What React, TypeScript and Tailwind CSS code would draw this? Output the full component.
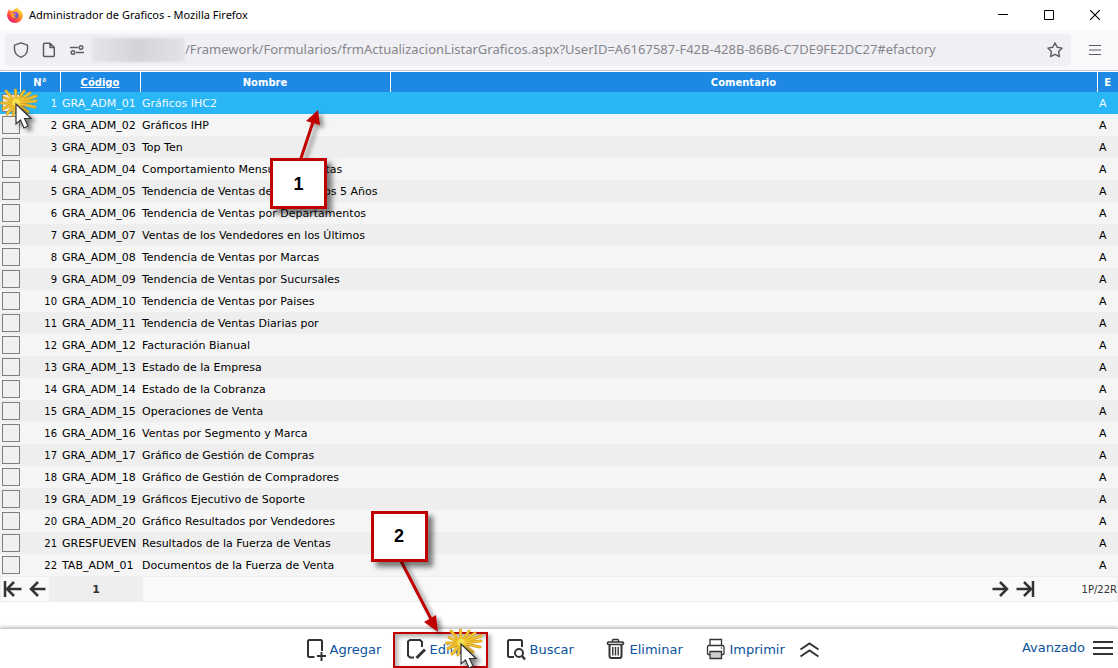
import { useState } from 'react'

interface Chart {
  code: string
  name: string
}

const CHARTS: Chart[] = [
  { code: 'GRA_ADM_01', name: 'Gráficos IHC2' },
  { code: 'GRA_ADM_02', name: 'Gráficos IHP' },
  { code: 'GRA_ADM_03', name: 'Top Ten' },
  { code: 'GRA_ADM_04', name: 'Comportamiento Mensual de Ventas' },
  { code: 'GRA_ADM_05', name: 'Tendencia de Ventas de los Últimos 5 Años' },
  { code: 'GRA_ADM_06', name: 'Tendencia de Ventas por Departamentos' },
  { code: 'GRA_ADM_07', name: 'Ventas de los Vendedores en los Últimos' },
  { code: 'GRA_ADM_08', name: 'Tendencia de Ventas por Marcas' },
  { code: 'GRA_ADM_09', name: 'Tendencia de Ventas por Sucursales' },
  { code: 'GRA_ADM_10', name: 'Tendencia de Ventas por Paises' },
  { code: 'GRA_ADM_11', name: 'Tendencia de Ventas Diarias por' },
  { code: 'GRA_ADM_12', name: 'Facturación Bianual' },
  { code: 'GRA_ADM_13', name: 'Estado de la Empresa' },
  { code: 'GRA_ADM_14', name: 'Estado de la Cobranza' },
  { code: 'GRA_ADM_15', name: 'Operaciones de Venta' },
  { code: 'GRA_ADM_16', name: 'Ventas por Segmento y Marca' },
  { code: 'GRA_ADM_17', name: 'Gráfico de Gestión de Compras' },
  { code: 'GRA_ADM_18', name: 'Gráfico de Gestión de Compradores' },
  { code: 'GRA_ADM_19', name: 'Gráficos Ejecutivo de Soporte' },
  { code: 'GRA_ADM_20', name: 'Gráfico Resultados por Vendedores' },
  { code: 'GRESFUEVEN', name: 'Resultados de la Fuerza de Ventas' },
  { code: 'TAB_ADM_01', name: 'Documentos de la Fuerza de Venta' },
]

function FirefoxLogo() {
  return (
    <svg width="16" height="16" viewBox="0 0 16 16" aria-hidden="true">
      <defs>
        <linearGradient id="fx-body" x1="0.85" y1="0.1" x2="0.2" y2="0.95">
          <stop offset="0" stopColor="#fff14a" />
          <stop offset="0.35" stopColor="#ffa126" />
          <stop offset="0.7" stopColor="#ff4a3d" />
          <stop offset="1" stopColor="#e5177b" />
        </linearGradient>
        <linearGradient id="fx-globe" x1="0.3" y1="0" x2="0.6" y2="1">
          <stop offset="0" stopColor="#a45bea" />
          <stop offset="1" stopColor="#4a4fd0" />
        </linearGradient>
      </defs>
      <path
        d="M2.6 2.1C2.7 3 3 3.500 3.500 3.900C4.200 3.700 5 3.700 5.800 4C6.500 2.800 7.500 2.300 8.300 2.100C8.600 1.300 9.200 0.500 9.900 0C10 1.400 11 2 12.300 2.900C13 3.400 13.300 3.900 13.500 4.200C13.500 3.800 13.400 3.300 13.300 3C15 4.400 15.900 6.300 15.900 8.500A7.900 7.500 0 0 1 0.100 8.500C0.100 5.800 1.300 3.500 2.600 2.100Z"
        fill="url(#fx-body)"
      />
      <circle cx="8.300" cy="8.300" r="3.200" fill="url(#fx-globe)" />
      <path d="M3.400 6C5 5.200 6.300 6 7.200 6.700C8 6.700 8.900 6.800 9 7.200C8.600 8 7.300 8 7 8.800C7 9.700 8.600 10 9.800 9.300C9 11.300 5.500 11.500 4.300 9.300Z" fill="#ff9a2c" />
    </svg>
  )
}

const RAYS =
  'M16 15L6 3M16 15L15.500 2M16 15L24 3M16 15L30 5M16 15L36 8M16 15L36 13M16 15L35 19M16 15L28 24M16 15L1.500 15M16 15L4 9.500M16 15L3 20.500M16 15L7 26M16 15L13 27'

function ClickPointer() {
  return (
    <svg width="44" height="48" viewBox="0 0 44 48" className="block" aria-hidden="true">
      <defs>
        <filter id="pointer-shadow" x="-50%" y="-50%" width="200%" height="200%">
          <feDropShadow dx="4" dy="3" stdDeviation="2" floodColor="#000" floodOpacity="0.5" />
        </filter>
      </defs>
      <path d={RAYS} stroke="#dba51c" strokeWidth="3" strokeLinecap="round" />
      <path d={RAYS} stroke="#f8cf3a" strokeWidth="1.200" strokeLinecap="round" />
      <circle cx="16" cy="14" r="3.500" fill="#f5e04e" />
      <g filter="url(#pointer-shadow)">
        <path d="M16 16V36L20.500 32L24 40L28 38L24.500 30.500H31Z" fill="#fff" stroke="#333" strokeWidth="1.200" />
      </g>
    </svg>
  )
}

function AddIcon() {
  return (
    <svg width="20" height="23" viewBox="0 0 20 23" aria-hidden="true">
      <path d="M8.500 19H3L2 18V3L3 2H15L16 3V13M11 18H20M15.500 14V23" fill="none" stroke="#333" strokeWidth="2" />
    </svg>
  )
}

function EditIcon() {
  return (
    <svg width="20" height="23" viewBox="0 0 20 23" aria-hidden="true">
      <path d="M8 19.500H4L2 17.500V3.500L4 2H14L16 4V9" fill="none" stroke="#333" strokeWidth="2" />
      <path d="M10.500 20L19 11.500" stroke="#333" strokeWidth="3" />
    </svg>
  )
}

function SearchIcon() {
  return (
    <svg width="20" height="23" viewBox="0 0 20 23" aria-hidden="true">
      <path d="M8 19H3L2 18V3L3 2H15L16 3V9" fill="none" stroke="#333" strokeWidth="2" />
      <circle cx="13" cy="15" r="4" fill="none" stroke="#333" strokeWidth="2" />
      <path d="M16 18L19 21.500" stroke="#333" strokeWidth="2.400" />
    </svg>
  )
}

function TrashIcon() {
  return (
    <svg width="20" height="23" viewBox="0 0 20 23" fill="none" stroke="#333" aria-hidden="true">
      <path d="M6.500 4V2.500Q6.500 1.500 7.500 1.500H11.500Q12.500 1.500 12.500 2.500V4" strokeWidth="1.500" />
      <rect x="1.500" y="4" width="16" height="2.500" rx="1" strokeWidth="1.600" />
      <path d="M3.500 7V18Q3.500 20 5.500 20H13.500Q15.500 20 15.500 18V7" strokeWidth="2" />
      <path d="M6.800 9V17.500M9.500 9V17.500M12.200 9V17.500" strokeWidth="1.400" />
    </svg>
  )
}

function PrintIcon() {
  return (
    <svg width="20" height="23" viewBox="0 0 20 23" fill="none" stroke="#333" strokeWidth="1.300" aria-hidden="true">
      <path d="M4 7.500V1.500H15.500V7.500" />
      <path d="M4 16.500H2.500Q1.500 16.500 1.500 15.500V9Q1.500 7.500 3 7.500H16.500Q18 7.500 18 9V15.500Q18 16.500 17 16.500H15.500" />
      <path d="M4 13.500H15.500V20.500H4Z" fill="#ccc" />
      <circle cx="15.500" cy="10" r="0.700" fill="#333" stroke="none" />
    </svg>
  )
}

function PagerArrow({ back = false, bar = false }: { back?: boolean; bar?: boolean }) {
  return (
    <svg width="20" height="20" viewBox="0 0 20 20" fill="none" stroke="#333" strokeWidth="2.500" className={back ? 'rotate-180' : ''} aria-hidden="true">
      <path d="M1.500 10H16M9 3L16 10L9 17" />
      {bar && <path d="M18 2V18" />}
    </svg>
  )
}

function Callout({ label }: { label: string }) {
  return (
    <div className="flex h-[51px] w-[57px] items-center justify-center border-3 border-[#c00000] bg-white font-['Liberation_Sans',sans-serif] text-lg font-bold text-black shadow-[5px_5px_5px_rgba(0,0,0,0.5)]">
      {label}
    </div>
  )
}

const barButton = 'flex h-9 w-[100px] items-center gap-1 pl-[7px] text-[13px] text-[#0b539b]'
const windowButton = 'flex h-[30px] w-[46px] items-center justify-center'

export default function App() {
  const [selected, setSelected] = useState(0)

  return (
    <div className="relative flex min-h-screen flex-col overflow-hidden bg-white font-['DejaVu_Sans',Verdana,sans-serif] text-[11px] text-black">
      {/* Window title */}
      <header className="flex h-[30px] items-center gap-[6px] pl-[7px] font-['Noto_Sans',sans-serif] text-[11px]">
        <FirefoxLogo />
        <h1>Administrador de Graficos - Mozilla Firefox</h1>
        <div className="ml-auto flex">
          <button type="button" aria-label="Minimizar" className={windowButton}>
            <svg width="10" height="10" stroke="#000"><path d="M0 4.500H10" /></svg>
          </button>
          <button type="button" aria-label="Maximizar" className={windowButton}>
            <svg width="10" height="10" stroke="#000" fill="none"><path d="M0.500 0.500H9.500V9.500H0.500Z" /></svg>
          </button>
          <button type="button" aria-label="Cerrar" className={windowButton}>
            <svg width="10" height="10" stroke="#000" strokeWidth="1.200"><path d="M0 0L10 10M10 0L0 10" /></svg>
          </button>
        </div>
      </header>

      {/* Address bar */}
      <div className="mb-px flex h-[41px] items-center border-b border-[#c8c8ce] bg-[#f9f9fb] pl-[5px]">
        <div className="flex h-8 min-w-0 flex-1 items-center rounded bg-[#f0f0f4] pr-2 pl-2 text-[#5b5b66]">
          <svg width="16" height="16" viewBox="0 0 16 16" fill="none" stroke="currentColor" strokeWidth="1.400" className="shrink-0" aria-hidden="true">
            <path d="M8 0.900L14.500 3.200V7C14.500 11 12 13.800 8 15.300C4 13.800 1.500 11 1.500 7V3.200Z" strokeLinejoin="round" />
          </svg>
          <svg width="16" height="16" viewBox="0 0 16 16" fill="none" stroke="currentColor" strokeWidth="1.500" className="ml-3 shrink-0" aria-hidden="true">
            <path d="M3.500 1.200H9L13.300 5.500V13.500Q13.300 14.500 12.300 14.500H3.500Q2.500 14.500 2.500 13.500V2.200Q2.500 1.200 3.500 1.200ZM9 1.200V5.500H13.300" strokeLinejoin="round" />
          </svg>
          <svg width="16" height="16" viewBox="0 0 16 16" fill="none" stroke="currentColor" strokeWidth="1.400" className="ml-3 shrink-0" aria-hidden="true">
            <path d="M1 5.500H9M7 10.500H15" />
            <circle cx="12" cy="5.500" r="1.800" />
            <circle cx="4" cy="10.500" r="1.800" />
          </svg>
          <span className="ml-[7px] h-6 w-[93px] shrink-0 bg-linear-to-r from-[#e6e6ea] via-[#d4d4d8] to-[#e3e3e7] blur-[1px]" />
          <input
            type="text"
            readOnly
            aria-label="Dirección"
            value="/Framework/Formularios/frmActualizacionListarGraficos.aspx?UserID=A6167587-F42B-428B-86B6-C7DE9FE2DC27#efactory"
            className="min-w-0 flex-1 bg-transparent font-['Noto_Sans',sans-serif] text-[13px] text-[#85858d] outline-none"
          />
          <button type="button" aria-label="Marcador">
            <svg width="16" height="16" viewBox="0 0 16 16" fill="none" stroke="currentColor" strokeWidth="1.400" strokeLinejoin="round">
              <path d="M8 0.900L10.200 5.300L15.100 6.100L11.600 9.600L12.400 14.600L8 12.300L3.600 14.600L4.400 9.600L0.900 6.100L5.800 5.300Z" />
            </svg>
          </button>
        </div>
        <button type="button" aria-label="Menú" className="flex w-[47px] justify-center text-[#5b5b66]">
          <svg width="12" height="12" stroke="currentColor" strokeWidth="1.200"><path d="M0 1.500H12M0 6H12M0 10.500H12" /></svg>
        </button>
      </div>

      {/* Chart list */}
      <table className="w-full table-fixed border-collapse">
        <colgroup>
          <col className="w-5" />
          <col className="w-10" />
          <col className="w-20" />
          <col className="w-[250px]" />
          <col />
          <col className="w-[21px]" />
        </colgroup>
        <thead>
          <tr className="h-5 bg-[#1e88e5] text-[10px] text-white">
            <th className="border-r border-white p-0" />
            <th className="border-r border-white p-0">N°</th>
            <th className="border-r border-white p-0"><a href="#codigo" className="underline">Código</a></th>
            <th className="border-r border-white p-0">Nombre</th>
            <th className="border-r border-white p-0">Comentario</th>
            <th className="p-0">E</th>
          </tr>
        </thead>
        <tbody>
          {CHARTS.map((chart, i) => (
            <tr
              key={chart.code}
              onClick={() => setSelected(i)}
              className={`h-[22px] leading-4 whitespace-nowrap ${i === selected ? 'bg-[#29b6f6] text-[#f0faff]' : 'odd:bg-[#eeeeee] even:bg-[#f5f5f5]'}`}
            >
              <td className="p-0 pl-[2px]">
                <input type="checkbox" aria-label={chart.name} className="block size-[18px] appearance-none border border-[#7f7f7f] bg-[#f0f0f0] checked:bg-[#1e88e5]" />
              </td>
              <td className="p-0 pt-[2px] pr-[3px] text-right text-[10px]">{i + 1}</td>
              <td className="p-0 pt-[2px] pl-[2px]">{chart.code}</td>
              <td className="p-0 pt-[2px] pl-[2px]">{chart.name}</td>
              <td className="p-0" />
              <td className="p-0 pt-[2px] pl-[2px]">A</td>
            </tr>
          ))}
        </tbody>
      </table>

      {/* Pager */}
      <nav className="flex h-[26px] items-center border border-[#eeeeee] bg-[#f9f9f9] text-[#333]">
        <button type="button" aria-label="Primera página" className="ml-[2px]"><PagerArrow back bar /></button>
        <button type="button" aria-label="Página anterior" className="ml-1"><PagerArrow back /></button>
        <span className="ml-[2px] flex h-full w-[94px] items-center justify-center bg-[#eeeeee] pt-[2px] font-bold">1</span>
        <button type="button" aria-label="Página siguiente" className="ml-auto"><PagerArrow /></button>
        <button type="button" aria-label="Última página" className="ml-1"><PagerArrow bar /></button>
        <span className="w-[82px] text-right text-[10px]">1P/22R</span>
      </nav>

      {/* Actions */}
      <footer className="mt-auto flex h-10 items-center border-t border-[#cccccc] bg-white pt-[2px] pl-1 shadow-[0_0_4px_rgba(0,0,0,0.4)]">
        <div className="flex-1" />
        <div className="flex items-center">
          <button type="button" className={barButton}><AddIcon />Agregar</button>
          <div className="relative">
            <button type="button" className={barButton}><EditIcon />Editar</button>
            <div className="pointer-events-none absolute top-0 -left-[6px] h-9 w-[95px] border-2 border-[#c00000] shadow-[3px_3px_4px_rgba(0,0,0,0.3),inset_3px_3px_4px_rgba(0,0,0,0.3)]" />
            <div className="pointer-events-none absolute -top-[4px] left-[46px]"><ClickPointer /></div>
            <div className="pointer-events-none absolute -top-[121px] -left-[28px]">
              <svg width="110" height="130" viewBox="0 0 110 130" className="absolute top-0 left-0 drop-shadow-[4px_3px_2px_rgba(0,0,0,0.4)]" aria-hidden="true">
                <path d="M29 48L60 108" stroke="#c00000" strokeWidth="3" />
                <path d="M67 121L53 111L65 104Z" fill="#c00000" />
              </svg>
              <div className="relative"><Callout label="2" /></div>
            </div>
          </div>
          <button type="button" className={barButton}><SearchIcon />Buscar</button>
          <button type="button" className={barButton}><TrashIcon />Eliminar</button>
          <button type="button" className={barButton}><PrintIcon />Imprimir</button>
          <button type="button" aria-label="Más acciones" className="w-5">
            <svg width="20" height="18" viewBox="0 0 20 18" fill="none" stroke="#333" strokeWidth="2"><path d="M1.500 8.500L10.500 2.500L19.500 8.500M1.500 15.500L10.500 9.500L19.500 15.500" /></svg>
          </button>
        </div>
        <div className="flex flex-1 justify-end pr-[5px] pb-1">
          <button type="button" className="flex items-center gap-2 text-[13px] text-[#0b539b]">
            Avanzado
            <svg width="20" height="16" stroke="#333" strokeWidth="2"><path d="M0 2H20M0 8H20M0 14H20" /></svg>
          </button>
        </div>
      </footer>

      {/* Step 1 */}
      <div className="pointer-events-none absolute top-[158px] left-[270px]">
        <svg width="80" height="60" viewBox="0 0 80 60" className="absolute -top-[50px] left-0 drop-shadow-[4px_3px_2px_rgba(0,0,0,0.4)]" aria-hidden="true">
          <path d="M30 53L43 14" stroke="#c00000" strokeWidth="3" />
          <path d="M48 2L50 17L36 13Z" fill="#c00000" />
        </svg>
        <div className="relative"><Callout label="1" /></div>
      </div>
      <div className="pointer-events-none absolute top-[88px] left-0"><ClickPointer /></div>
    </div>
  )
}
